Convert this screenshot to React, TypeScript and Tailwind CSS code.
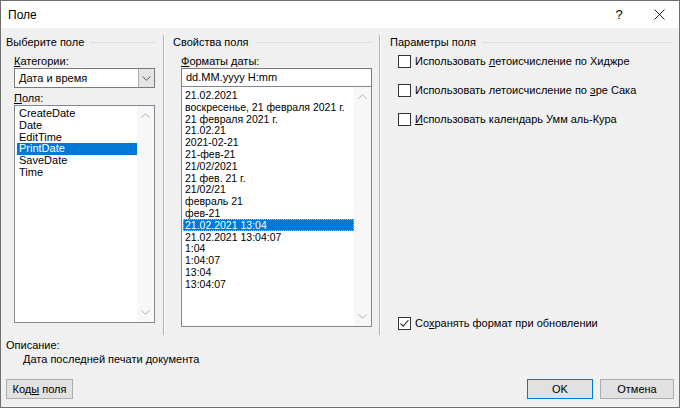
import React from "react";

const fields = ["CreateDate", "Date", "EditTime", "PrintDate", "SaveDate", "Time"];

const formats = [
  "21.02.2021",
  "воскресенье, 21 февраля 2021 г.",
  "21 февраля 2021 г.",
  "21.02.21",
  "2021-02-21",
  "21-фев-21",
  "21/02/2021",
  "21 фев. 21 г.",
  "21/02/21",
  "февраль 21",
  "фев-21",
  "21.02.2021 13:04",
  "21.02.2021 13:04:07",
  "1:04",
  "1:04:07",
  "13:04",
  "13:04:07",
];

const Chevron = ({ up, color = "#b0b0b0" }: { up?: boolean; color?: string }) => (
  <svg width="9" height="5" viewBox="0 0 9 5">
    <path
      d={up ? "M0.5 4.5 L4.5 0.8 L8.5 4.5" : "M0.5 0.5 L4.5 4.2 L8.5 0.5"}
      fill="none"
      stroke={color}
      strokeWidth="1"
    />
  </svg>
);

const GroupHeader = ({ title, pl, pr }: { title: string; pl: string; pr: string }) => (
  <div className={`flex items-center h-[14px] ${pl} ${pr}`}>
    <span className="whitespace-nowrap">{title}</span>
    <div className="flex-1 h-px bg-[#dcdcdc] ml-[6px]" />
  </div>
);

const Scrollbar = () => (
  <div className="w-[17px] bg-[#f7f7f7] flex flex-col items-center justify-between py-[7px]">
    <Chevron up />
    <Chevron />
  </div>
);

const Checkbox = ({ checked }: { checked?: boolean }) => (
  <div className="w-[13px] h-[13px] border border-[#333333] bg-white flex items-center justify-center shrink-0">
    {checked && (
      <svg width="11" height="11" viewBox="0 0 11 11">
        <path d="M1.5 5.5 L4.2 8.2 L9.5 2" fill="none" stroke="#333333" strokeWidth="1.1" />
      </svg>
    )}
  </div>
);

const Separator = () => (
  <div className="w-[2px] h-[300px] flex shrink-0">
    <div className="w-px bg-[#b4b4b4]" />
    <div className="w-px bg-white" />
  </div>
);

export default function App() {
  return (
    <div className="w-[680px] h-[408px] border border-[#6f6f6f] bg-[#f0f0f0] flex flex-col text-[11px] text-black font-['Liberation_Sans',Arial,sans-serif] overflow-hidden">
      {/* title bar */}
      <div className="h-[27px] bg-white flex items-center justify-between pl-[7px] shrink-0">
        <span className="text-[12px]">Поле</span>
        <div className="flex items-center h-full">
          <span className="w-[40px] text-center text-[13px]">?</span>
          <div className="w-[40px] flex justify-center">
            <svg width="11" height="11" viewBox="0 0 11 11">
              <path d="M0.5 0.5 L10.5 10.5 M10.5 0.5 L0.5 10.5" stroke="#222" strokeWidth="1" />
            </svg>
          </div>
        </div>
      </div>

      <div className="flex-1 flex flex-col pt-[7px] px-[5px]">
        <div className="flex h-[300px]">
          {/* left column */}
          <div className="w-[157px] flex flex-col">
            <GroupHeader title="Выберите поле" pl="pl-0" pr="pr-[8px]" />
            <div className="pl-[8px] pr-[8px] flex flex-col">
              <div className="h-[14px] mt-[5px] leading-[14px]">
                <u>К</u>атегории:
              </div>
              <div className="h-[20px] border border-[#7a7a7a] bg-white flex">
                <div className="flex-1 pl-[4px] leading-[18px]">Дата и время</div>
                <div className="w-[16px] bg-[#e5e5e5] border-l border-[#adadad] flex items-center justify-center">
                  <Chevron color="#555" />
                </div>
              </div>
              <div className="h-[14px] mt-[3px] leading-[14px]">
                <u>П</u>оля:
              </div>
              <div className="h-[218px] border border-[#828790] bg-white flex">
                <div className="flex-1 pt-[2px] pl-[2px]">
                  {fields.map((f) => (
                    <div
                      key={f}
                      className={`h-[11.8px] leading-[11.8px] pl-[2px] whitespace-nowrap ${
                        f === "PrintDate" ? "bg-[#0078d7] text-white" : ""
                      }`}
                    >
                      {f}
                    </div>
                  ))}
                </div>
                <Scrollbar />
              </div>
            </div>
          </div>

          <Separator />

          {/* middle column */}
          <div className="w-[214px] flex flex-col">
            <GroupHeader title="Свойства поля" pl="pl-[8px]" pr="pr-[7px]" />
            <div className="pl-[16px] pr-[7px] flex flex-col">
              <div className="h-[14px] mt-[5px] leading-[14px]">
                <u>Ф</u>орматы даты:
              </div>
              <div className="h-[18px] border border-b-0 border-[#7a7a7a] bg-white pl-[4px] leading-[16px]">
                dd.MM.yyyy H:mm
              </div>
              <div className="h-[241px] border border-[#828790] bg-white flex">
                <div className="flex-1 pt-[2px] pl-[1px] text-[10.5px]">
                  {formats.map((f) => {
                    const sel = f === "21.02.2021 13:04";
                    return (
                      <div
                        key={f}
                        className={`h-[11.8px] leading-[10px] pl-[1px] whitespace-nowrap ${
                          sel
                            ? "bg-[#0078d7] text-white border border-dotted border-[#f2b25c]"
                            : "border border-transparent"
                        }`}
                      >
                        {f}
                      </div>
                    );
                  })}
                </div>
                <Scrollbar />
              </div>
            </div>
          </div>

          <Separator />

          {/* right column */}
          <div className="flex-1 flex flex-col">
            <GroupHeader title="Параметры поля" pl="pl-[9px]" pr="pr-[1px]" />
            <div className="pl-[17px] flex flex-col flex-1 pb-[5px]">
              <div className="flex items-center gap-[4px] h-[13px] mt-[6px]">
                <Checkbox />
                <span className="whitespace-nowrap">
                  Использовать <u>л</u>етоисчисление по Хиджре
                </span>
              </div>
              <div className="flex items-center gap-[4px] h-[13px] mt-[16px]">
                <Checkbox />
                <span className="whitespace-nowrap">
                  Использовать летоисчисление по <u>э</u>ре Сака
                </span>
              </div>
              <div className="flex items-center gap-[4px] h-[13px] mt-[16px]">
                <Checkbox />
                <span className="whitespace-nowrap">
                  <u>И</u>спользовать календарь Умм аль-Кура
                </span>
              </div>
              <div className="flex items-center gap-[4px] h-[13px] mt-auto">
                <Checkbox checked />
                <span className="whitespace-nowrap">
                  Со<u>х</u>ранять формат при обновлении
                </span>
              </div>
            </div>
          </div>
        </div>

        {/* description */}
        <div className="h-[14px] mt-[3px] leading-[14px]">Описание:</div>
        <div className="h-[14px] leading-[14px] pl-[17px]">Дата последней печати документа</div>

        {/* buttons */}
        <div className="flex justify-between mt-[13px]">
          <button className="w-[67px] h-[20px] bg-[#e1e1e1] border border-[#adadad] text-[11px] leading-[18px]">
            Код<u>ы</u> поля
          </button>
          <div className="flex gap-[7px]">
            <button className="w-[66px] h-[20px] bg-[#e1e1e1] border border-[#0078d7] text-[11px] leading-[18px]">
              OK
            </button>
            <button className="w-[74px] h-[20px] bg-[#e1e1e1] border border-[#adadad] text-[11px] leading-[18px]">
              Отмена
            </button>
          </div>
        </div>
      </div>
    </div>
  );
}
